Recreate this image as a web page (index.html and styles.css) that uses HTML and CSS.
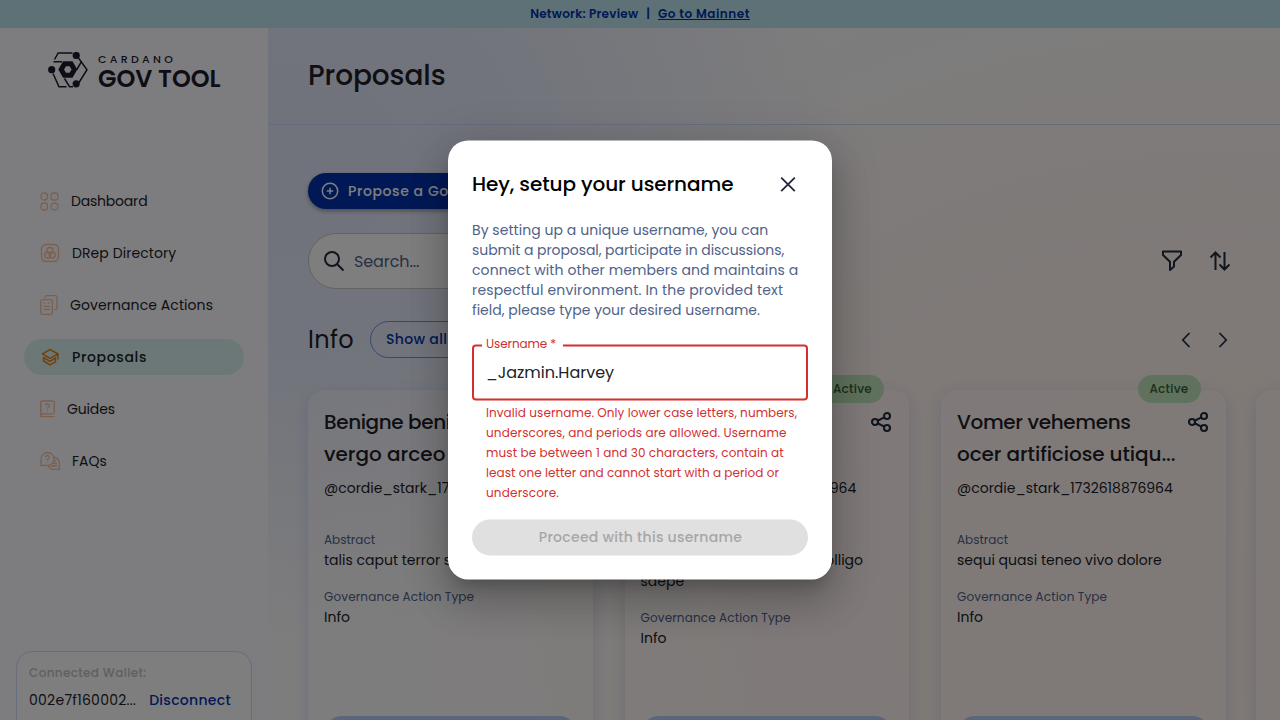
FILE: index.html
```html
<!DOCTYPE html>
<html lang="en">
<head>
<meta charset="utf-8">
<title>Proposals - GovTool</title>
<link rel="stylesheet" href="styles.css">
</head>
<body>
<div class="app">
  <div class="banner"><span class="t-network">Network: Preview</span><span class="banner-sep">|</span><a class="t-mainnet">Go to Mainnet</a></div>
  <div class="shell">
    <aside class="sidebar">
      <div class="logo">
        <svg width="40" height="36" viewBox="0 0 40 36" fill="none" stroke="#1d1b2e" stroke-width="1.5">
          <path d="M6.500 7.500 10.200 .9H24.500"/><path d="M30.500 6 39 17.700 31 30.500"/><path d="M5 21.500 11 34.700H18.500"/><path d="M5.500 9.700H14M33.500 9.700 28.500 18M16.500 26.500 21.500 34.700H25"/>
          <path d="M16.500 11.800H23.100L26.400 17.500 23.100 23.200H16.500L13.200 17.500Z" stroke-width="5"/>
          <g fill="#1d1b2e" stroke="none"><circle cx="28.200" cy="3.500" r="3.600"/><circle cx="3.700" cy="17.700" r="3.600"/><circle cx="28.200" cy="31.800" r="3.600"/></g>
        </svg>
        <div class="logo-text"><div class="logo-top t-cardano">CARDANO</div><div class="logo-main t-gov">GOV TOOL</div></div>
      </div>
      <nav class="nav">
        <a class="nav-item"><svg width="19" height="20" viewBox="0 0 19 20"><rect x="1" y="2" width="6.500" height="7" rx="3"/><rect x="11" y="2" width="7" height="7" rx="2.500"/><rect x="1" y="12" width="6.500" height="7" rx="2.500"/><rect x="11" y="12" width="7" height="7" rx="3.500"/></svg><span class="nav-dash">Dashboard</span></a>
        <a class="nav-item"><svg width="20" height="20" viewBox="0 0 20 20"><rect x="1.500" y="1.500" width="17" height="17" rx="4.500"/><circle cx="10" cy="7.500" r="3"/><circle cx="7.700" cy="12" r="3"/><circle cx="12.300" cy="12" r="3"/></svg><span class="nav-drep">DRep Directory</span></a>
        <a class="nav-item"><svg width="18" height="20" viewBox="0 0 18 20"><rect x=".7" y="4.700" width="11.600" height="14.600" rx="1.800"/><path d="M5 3.500V2.300Q5 .7 6.500 .7H15.300Q17 .7 17 2.500V12.500Q17 14.500 14.500 14.500M3.500 8.200H5.500M7.500 8.200H9.500M3.500 11.300H10M3.500 14.300H10"/></svg><span class="nav-gov">Governance Actions</span></a>
        <a class="nav-item active"><svg width="20" height="20" viewBox="0 0 20 20"><path d="M2.500 6.800 10 2.500 17.800 6.800 10 11.300ZM3.500 10V14L10 17.800 15.500 14.800V10M3.500 10.500 10 14.300 15.500 11M17.900 7V12.500"/></svg><span class="nav-prop">Proposals</span></a>
        <a class="nav-item"><svg width="15" height="20" viewBox="0 0 15 20"><rect x=".8" y="2" width="13.500" height="12.800" rx="1.500"/><path d="M.8 4V17.600H14.300M.8 16.500Q.8 14.800 3 14.800M5.500 6.500Q5.500 5 7.500 5 9.500 5 9.500 6.800 9.500 8 7.500 8.800V10M7.500 11.200V12.200"/></svg><span class="nav-guides">Guides</span></a>
        <a class="nav-item"><svg width="20" height="20" viewBox="0 0 20 20"><path d="M1 14.500V8A6.500 6.500 0 1 1 7.500 14.500ZM14 6Q19.500 7.500 19.300 12.800V18.300H13Q10 18.300 8.500 15M13 10H16M12 12.500H17M11 15H17M5.500 6.500Q5.500 4.500 7.300 4.500 9 4.500 9 6.200 9 7.500 7.200 8.500V9.500M7.200 10.800V11.500"/></svg><span class="nav-faq">FAQs</span></a>
      </nav>
      <div class="wallet">
        <div class="wallet-label"><span class="t-wallet">Connected Wallet:</span></div>
        <div class="wallet-row"><span class="t-addr">002e7f160002...</span><a class="t-disc">Disconnect</a></div>
      </div>
    </aside>
    <main class="main">
      <header class="header"><h1 class="t-title">Proposals</h1></header>
      <div class="content">
        <button class="propose"><svg width="20" height="20" viewBox="0 0 20 20" fill="none" stroke="#fff" stroke-width="1.500"><circle cx="10" cy="10" r="7.700"/><path d="M10 6.800V13.200M6.800 10H13.200"/></svg><span class="t-propose">Propose a Governance Action</span></button>
        <div class="tools">
          <div class="search"><svg width="24" height="24" viewBox="0 0 24 24" fill="none" stroke="#212a3d" stroke-width="2"><circle cx="10" cy="10" r="7"/><path d="M15 15 21.500 21.500"/></svg><span class="t-search">Search...</span></div>
          <div class="tool-icons">
            <svg width="24" height="24" viewBox="0 0 24 24" fill="none" stroke="#212a3d" stroke-width="2" stroke-linejoin="round"><path d="M3 2.500H21V6L14 12.700V17.500L10 21V12.700L3 6Z"/></svg>
            <svg width="24" height="24" viewBox="0 0 24 24" fill="none" stroke="#212a3d" stroke-width="2"><path d="M7.500 21V3.500M2.500 8.500 7.500 3.500 12.500 8.500M16.500 3V20.500M11.500 15.500 16.500 20.500 21.500 15.500"/></svg>
          </div>
        </div>
        <div class="section-head">
          <h2 class="t-info">Info</h2><button class="show-all"><span class="t-show">Show all</span></button>
          <div class="arrows"><svg width="24" height="24" viewBox="0 0 24 24"><path d="M15.500 5 8.800 12 15.500 19"/></svg><svg width="24" height="24" viewBox="0 0 24 24"><path d="M8.500 5 15.200 12 8.500 19"/></svg></div>
        </div>
        <div class="cards">
          <article class="card">
            <div class="card-head"><h3><span class="t-c1a">Benigne beni</span><br><span class="t-c1b">vergo arceo</span></h3></div>
            <p class="user"><span class="t-user">@cordie_stark_1732618876964</span></p>
            <p class="label"><span class="t-abs">Abstract</span></p><p class="value"><span class="t-v1">talis caput terror sumo</span></p>
            <p class="label"><span class="t-type">Governance Action Type</span></p><p class="value"><span class="t-vinfo">Info</span></p>
            <div class="card-button"></div>
          </article>
          <article class="card">
            <span class="badge"><span class="t-active">Active</span></span>
            <div class="card-head"><h3></h3><svg class="share" viewBox="0 0 24 24"><circle cx="6" cy="12" r="3"/><circle cx="18" cy="6" r="3"/><circle cx="18" cy="18" r="3"/><path d="M8.700 10.700 15.300 7.400M8.700 13.300 15.300 16.600"/></svg></div>
            <p class="user"><span class="t-user">@cordie_stark_1732618876964</span></p>
            <p class="label"><span class="t-abs">Abstract</span></p><p class="value two-lines"><span class="olligo">colligo</span><span class="t-saepe">saepe</span></p>
            <p class="label"><span class="t-type">Governance Action Type</span></p><p class="value"><span class="t-vinfo">Info</span></p>
            <div class="card-button"></div>
          </article>
          <article class="card">
            <span class="badge"><span class="t-active">Active</span></span>
            <div class="card-head"><h3><span class="t-c3a">Vomer vehemens</span><br><span class="t-c3b">ocer artificiose utiqu...</span></h3><svg class="share" viewBox="0 0 24 24"><circle cx="6" cy="12" r="3"/><circle cx="18" cy="6" r="3"/><circle cx="18" cy="18" r="3"/><path d="M8.700 10.700 15.300 7.400M8.700 13.300 15.300 16.600"/></svg></div>
            <p class="user"><span class="t-user">@cordie_stark_1732618876964</span></p>
            <p class="label"><span class="t-abs">Abstract</span></p><p class="value"><span class="t-v3">sequi quasi teneo vivo dolore</span></p>
            <p class="label"><span class="t-type">Governance Action Type</span></p><p class="value"><span class="t-vinfo">Info</span></p>
            <div class="card-button"></div>
          </article>
          <article class="card"></article>
        </div>
      </div>
    </main>
  </div>
</div>
<div class="backdrop">
  <section class="dialog">
    <div class="dialog-head"><h2 class="t-hey">Hey, setup your username</h2><svg width="24" height="24" viewBox="0 0 24 24" fill="none" stroke="#212a3d" stroke-width="1.900"><path d="M5.200 5.200 18.800 18.800M18.800 5.200 5.200 18.800"/></svg></div>
    <p class="desc"><span class="t-d1">By setting up a unique username, you can</span><span class="t-d2">submit a proposal, participate in discussions,</span><span class="t-d3">connect with other members and maintains a</span><span class="t-d4">respectful environment. In the provided text</span><span class="t-d5">field, please type your desired username.</span></p>
    <div class="field"><span class="field-label"><span class="t-label">Username *</span></span><span class="t-input">_Jazmin.Harvey</span></div>
    <p class="error"><span class="t-e1">Invalid username. Only lower case letters, numbers,</span><span class="t-e2">underscores, and periods are allowed. Username</span><span class="t-e3">must be between 1 and 30 characters, contain at</span><span class="t-e4">least one letter and cannot start with a period or</span><span class="t-e5">underscore.</span></p>
    <button class="proceed"><span class="t-proceed">Proceed with this username</span></button>
  </section>
</div>
</body>
</html>
```

FILE: styles.css
```css
* { box-sizing: border-box; }
body { margin: 0; font-family: Poppins, Inter, "Open Sans", sans-serif; font-size: 14px; color: #212128; overflow: hidden; }
h1, h2, h3, p { margin: 0; font-weight: 500; }
button { font: inherit; border: 0; padding: 0; }
span, a { white-space: nowrap; }
.app { height: 720px; display: flex; flex-direction: column; overflow: hidden; }
.banner { height: 28px; flex: none; background: #bce3ee; display: flex; justify-content: center; align-items: center; font-size: 12px; font-weight: 600; color: #0033ad; }
.banner-sep { margin: 0 8px; }
.banner a { text-decoration: underline; }
.shell { flex: 1; min-height: 0; display: flex; }
.sidebar { width: 268px; flex: none; background: #fbfbff; display: flex; flex-direction: column; padding: 24px 0 0; }
.logo { display: flex; gap: 9px; padding-left: 48px; height: 36px; color: #1d1b2e; }
.logo-text { display: flex; flex-direction: column; }
.logo-top { font-size: 11px; line-height: 14px; font-weight: 500; }
.logo-main { font-size: 24px; line-height: 26px; font-weight: 600; }
.nav { display: flex; flex-direction: column; gap: 16px; padding: 95px 24px 0; }
.nav-item { height: 36px; display: flex; align-items: center; gap: 12px; padding-left: 16px; border-radius: 18px; }
.nav-item svg { fill: none; stroke: #f8bf9f; stroke-width: 1.3; }
.nav-item.active { background: #d6f0ee; font-weight: 500; }
.nav-item.active svg { stroke: #e67e13; stroke-width: 1.5; }
.wallet { margin: 172px 16px 0; height: 100px; flex: none; border: 1px solid #d0d8fa; border-radius: 16px; padding: 11px 12px; background: #fdfdfe; }
.wallet-label { font-size: 12px; line-height: 20px; font-weight: 500; color: #bfbfbf; }
.wallet-row { display: flex; justify-content: space-between; padding-right: 8px; line-height: 20px; margin-top: 7px; }
.wallet-row a { color: #0033ad; font-weight: 500; }
.main { flex: 1; min-width: 0; background: radial-gradient(ellipse 560px 480px at 20px 130px, #e0e6f8 0%, rgba(224,230,248,.85) 40%, rgba(224,230,248,0) 100%), radial-gradient(ellipse 850px 680px at 950px 600px, #fff1eb 0%, rgba(255,241,235,.75) 55%, rgba(255,241,235,0) 100%), #fbfafb; }
.header { height: 97px; border-bottom: 1px solid #ccd8f8; padding: 0 40px; display: flex; align-items: center; }
.header h1 { font-size: 28px; line-height: 36px; }
.content { padding: 48px 40px 0; display: flex; flex-direction: column; }
.propose { width: 270px; height: 36px; border-radius: 18px; background: #0033ad; color: #fff; display: flex; align-items: center; gap: 8px; padding-left: 12px; font-weight: 500; box-shadow: 0 2px 4px rgba(0,0,0,.35); overflow: hidden; }
.tools { display: flex; justify-content: space-between; align-items: center; margin-top: 24px; }
.search { width: 500px; height: 56px; border-radius: 28px; border: 1px solid #c9c5c5; background: #fefdfd; display: flex; align-items: center; gap: 8px; padding-left: 13px; font-size: 16px; color: #506288; }
.tool-icons { display: flex; gap: 24px; padding-right: 8px; }
.section-head { display: flex; align-items: center; gap: 16px; margin-top: 32px; height: 37px; }
.section-head h2 { font-size: 24px; font-weight: 400; line-height: 32px; padding-top: 1px; }
.show-all { width: 110px; height: 37px; border: 1px solid #6e8fdb; border-radius: 19px; background: none; color: #0033ad; font-weight: 500; text-align: left; padding-left: 15px; }
.arrows { margin-left: auto; display: flex; gap: 12.5px; padding-right: 5.5px; }
.arrows svg { fill: none; stroke: #212a3d; stroke-width: 1.7; }
.cards { display: flex; gap: 32px; margin-top: 32px; width: 1300px; }
.card { position: relative; width: 284.5px; height: 400px; flex: none; border-radius: 16px; background: rgba(255,253,252,.3); box-shadow: 0 4px 15px rgba(47,98,220,.16); padding: 16px; }
.card:last-child { margin-left: -1.5px; }
.card-head { display: flex; justify-content: space-between; height: 64px; }
.card h3 { font-size: 20px; line-height: 32px; }
.share { width: 24px; height: 24px; margin-top: 4px; fill: none; stroke: #212a3d; stroke-width: 2.1; flex: none; }
.badge { position: absolute; top: -15px; right: 25px; width: 63px; height: 28px; border-radius: 14px; background: #c0e4ba; color: #365e36; font-size: 12px; font-weight: 500; line-height: 28px; text-align: center; }
.user { line-height: 20px; margin-top: 8px; font-weight: 400; }
.label { font-size: 12px; line-height: 20px; font-weight: 400; color: #506288; margin-top: 16px; }
.user + .label { margin-top: 32px; }
.value { line-height: 21px; font-weight: 400; }
.two-lines { display: flex; flex-direction: column; }
.olligo { align-self: flex-end; margin-right: 30px; }
.card-button { height: 36px; border-radius: 18px; background: #b6ccf8; margin-top: 88px; }
.two-lines ~ .card-button { margin-top: 67px; }
.backdrop { position: absolute; inset: 0; height: 720px; background: rgba(0,0,0,.5); }
.dialog { position: absolute; top: 50%; left: 50%; transform: translate(-50%, calc(-50% - .1px)); width: 384px; height: 439px; border-radius: 20px; background: #fff; padding: 24px; box-shadow: 0 11px 15px -7px rgba(0,0,0,.2), 0 24px 38px 3px rgba(0,0,0,.14), 0 9px 46px 8px rgba(0,0,0,.12); }
.dialog-head { display: flex; justify-content: space-between; align-items: center; height: 40px; padding-right: 8px; color: #000; }
.dialog-head h2 { font-size: 20px; line-height: 32px; }
.desc { display: flex; flex-direction: column; align-items: flex-start; line-height: 20px; font-weight: 400; color: #506288; margin-top: 16px; }
.field { position: relative; height: 56px; border: 2px solid #d32f2f; border-radius: 4px; margin-top: 24px; display: flex; align-items: center; padding-left: 12px; font-size: 16px; }
.field-label { position: absolute; top: -12px; left: 8px; width: 81px; padding-left: 4px; line-height: 20px; background: #fff; color: #d32f2f; font-size: 12px; }
.error { display: flex; flex-direction: column; align-items: flex-start; font-size: 12px; line-height: 20px; font-weight: 400; color: #d32f2f; margin: 3px 14px 0; }
.proceed { display: block; width: 100%; height: 36px; border-radius: 18px; margin-top: 16px; background: #e0e0e0; color: #a6a6a6; font-weight: 500; }

/* Per-string tracking */
.t-network { letter-spacing: .25px; }
.t-mainnet { letter-spacing: .52px; }
.t-cardano { letter-spacing: 3.3px; padding-left: 1px; }
.t-gov { padding-left: 1px; }
.t-title { letter-spacing: -.1px; }
.nav-dash { letter-spacing: -.2px; }
.nav-drep, .nav-gov { letter-spacing: .08px; }
.nav-prop { letter-spacing: .65px; }
.nav-guides { letter-spacing: -.15px; }
.t-wallet { letter-spacing: .36px; }
.t-addr { letter-spacing: .27px; }
.t-disc { letter-spacing: .3px; }
.t-propose { letter-spacing: .6px; }
.t-search { letter-spacing: -.1px; }
.t-info { letter-spacing: .35px; }
.t-show { letter-spacing: .35px; }
.t-c1a { letter-spacing: -.4px; }
.t-c3a { letter-spacing: -.35px; }
.t-c3b { letter-spacing: -.09px; }
.t-type { letter-spacing: .14px; }
.t-active { letter-spacing: .25px; }
.t-hey { letter-spacing: -.09px; }
.t-d1 { letter-spacing: .05px; }
.t-d2 { letter-spacing: -.07px; }
.t-d3 { letter-spacing: .1px; }
.t-d4 { letter-spacing: .16px; }
.t-d5 { letter-spacing: .02px; }
.t-label { letter-spacing: -.1px; }
.t-e1 { letter-spacing: .08px; }
.t-e2 { letter-spacing: .15px; }
.t-e3 { letter-spacing: .11px; }
.t-e4 { letter-spacing: .06px; }
.t-e5 { letter-spacing: .18px; }
.t-proceed { letter-spacing: .28px; padding-left: 1px; }
```
